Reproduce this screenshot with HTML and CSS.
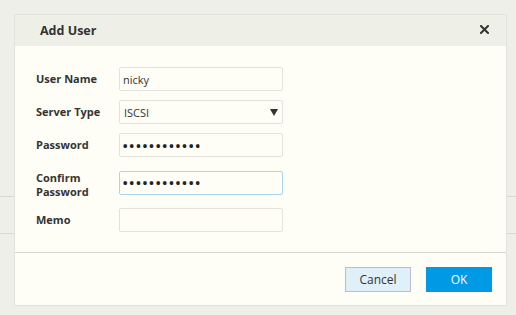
FILE: index.html
```html
<!DOCTYPE html>
<html>
<head>
<meta charset="utf-8">
<link rel="stylesheet" href="styles.css">
</head>
<body>
<div class="page">
  <div class="page-row page-row-a"></div>
  <div class="page-row page-row-b"></div>
</div>
<div class="dialog">
  <div class="dlg-head">
    <span class="dlg-title">Add User</span>
    <svg class="dlg-close" width="9" height="9" viewBox="0 0 9 9"><path d="M1 1L8 8M8 1L1 8" stroke="#333" stroke-width="2" stroke-linecap="square"/></svg>
  </div>
  <div class="dlg-body">
    <form class="form">
      <label class="lbl">User Name</label>
      <input class="field" type="text" value="nicky">
      <label class="lbl">Server Type</label>
      <div class="field select">
        <span>ISCSI</span>
        <svg width="8" height="7" viewBox="0 0 8 7"><path d="M0 0H8L4 7Z" fill="#333"/></svg>
      </div>
      <label class="lbl">Password</label>
      <input class="field pw" type="password" value="abcdefghijkl">
      <label class="lbl lbl-two">Confirm<br>Password</label>
      <input class="field pw focus" type="password" value="abcdefghijkl">
      <label class="lbl">Memo</label>
      <input class="field" type="text" value="">
    </form>
  </div>
  <div class="dlg-foot">
    <button class="btn btn-cancel" type="button">Cancel</button>
    <button class="btn btn-ok" type="button">OK</button>
  </div>
</div>
</body>
</html>
```
FILE: styles.css
```css
html, body {
  margin: 0;
  padding: 0;
}
body {
  width: 516px;
  height: 315px;
  background: #edefe8;
  font-family: "Open Sans", "Noto Sans", sans-serif;
  color: #333;
  overflow: hidden;
  position: relative;
}
.page {
  padding-top: 196px;
}
.page-row {
  border-top: 1px solid #d9dbd3;
}
.page-row-a {
  height: 36px;
}
.dialog {
  position: absolute;
  left: 15px;
  top: 15px;
  width: 491px;
  height: 290px;
  background: #fefef6;
  box-shadow: 0 0 0 1px #e2e4dc;
  display: flex;
  flex-direction: column;
}
.dlg-head {
  height: 31px;
  background: #eef0e8;
  display: flex;
  align-items: center;
  justify-content: space-between;
  padding: 0 17px 0 25px;
}
.dlg-title {
  font-weight: 700;
  font-size: 12.5px;
  color: #333;
}
.dlg-close {
  margin-top: -3px;
}
.dlg-body {
  flex: 1;
  padding: 21px 0 0 21px;
  border-bottom: 1px solid #d6d8d0;
}
.form {
  display: grid;
  grid-template-columns: 83px 164px;
  row-gap: 9px;
  align-items: center;
  margin: 0;
}
.lbl {
  font-size: 11px;
  font-weight: 700;
  color: #333;
  line-height: 14px;
}
.lbl-two {
  align-self: start;
  padding-top: 5px;
}
.field {
  box-sizing: border-box;
  width: 164px;
  height: 24px;
  border: 1px solid #e3e3dc;
  border-radius: 2px;
  background: #fefef6;
  font-family: "Open Sans", "Noto Sans", sans-serif;
  font-size: 11px;
  color: #333;
  padding: 0 3px;
  margin: 0;
  outline: none;
}
.select {
  display: flex;
  align-items: center;
  justify-content: space-between;
  padding: 0 4px 0 4px;
}
.pw {
  font-size: 17px;
  letter-spacing: 0.2px;
  padding-left: 2px;
  color: #222;
}
.focus {
  border-color: #a9d6ee;
}
.dlg-foot {
  height: 52px;
  display: flex;
  align-items: center;
  justify-content: flex-end;
  gap: 15px;
  padding-right: 14px;
}
.btn {
  box-sizing: border-box;
  width: 66px;
  height: 25px;
  font-family: "Open Sans", "Noto Sans", sans-serif;
  font-size: 12px;
  border-radius: 0;
  margin: 0;
  padding: 0;
}
.btn-cancel {
  background: #dff0f8;
  border: 1px solid #bdbdd2;
  color: #333;
}
.btn-ok {
  background: #0099e6;
  border: 1px solid #0099e6;
  color: #fff;
}
```
